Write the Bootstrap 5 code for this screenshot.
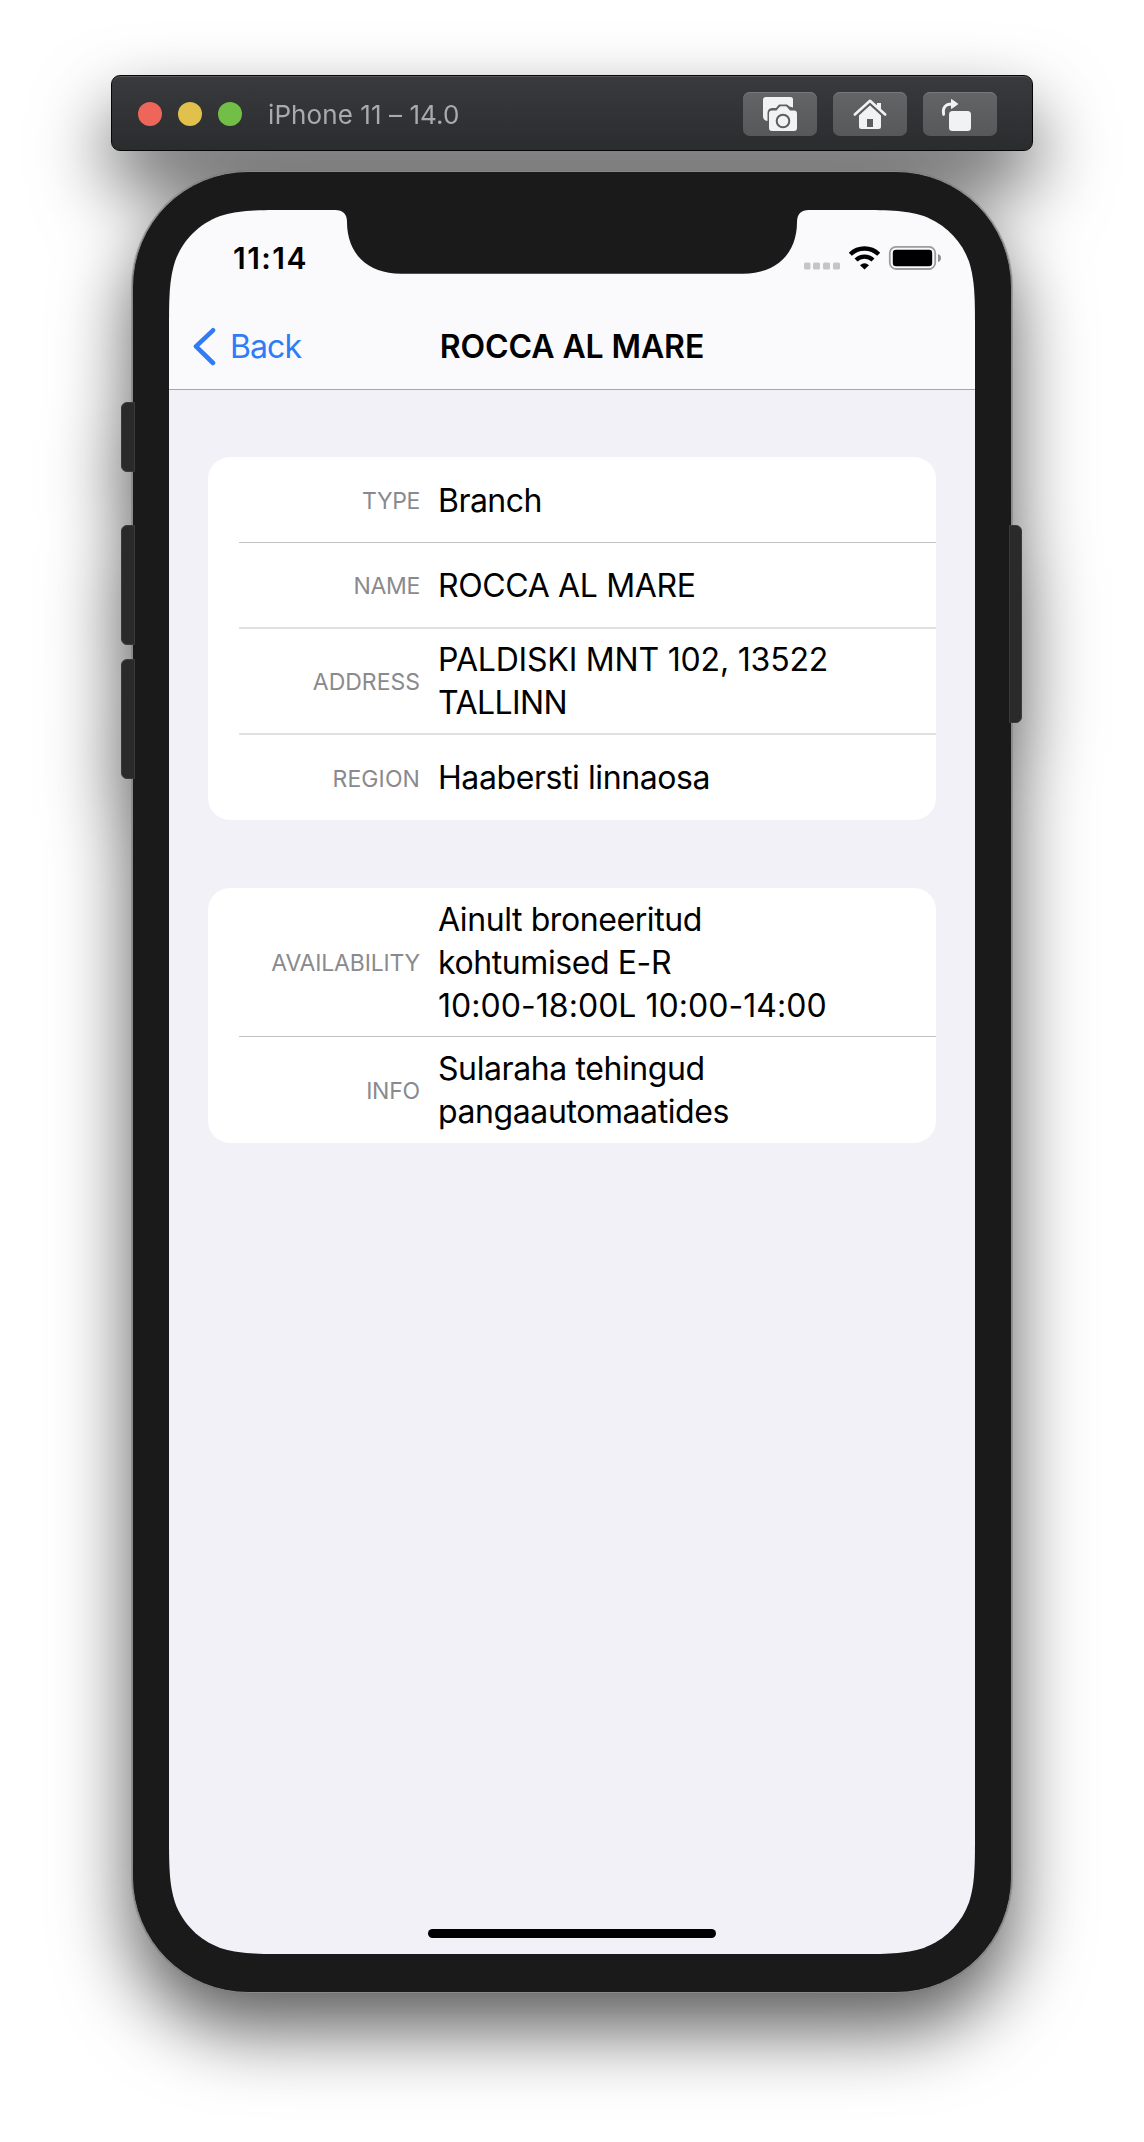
<!DOCTYPE html>
<html lang="en">
<head>
<meta charset="utf-8">
<meta name="viewport" content="width=device-width, initial-scale=1">
<title>iPhone 11 – 14.0</title>
<link href="https://cdn.jsdelivr.net/npm/bootstrap@5.3.0/dist/css/bootstrap.min.css" rel="stylesheet">
<style>
  body { background: #fff; font-family: Inter, "Liberation Sans", sans-serif; color: #000; }
  svg { display: block; flex: none; }
  .sim-stage { height: 2142px; padding-top: 75px; overflow: hidden; filter: drop-shadow(0 36px 37px rgba(0,0,0,.64)); }

  /* simulator title bar */
  .sim-bar { width: 922px; height: 76px; padding: 2px 35px 0 26px; border-radius: 9px; border: 1px solid #050606;
    background: linear-gradient(#393a3d, #2b2c2e); box-shadow: inset 0 1px 0 #58595b; }
  .sim-dot { width: 24px; height: 24px; border-radius: 50%; margin-right: 16px; }
  .sim-title { font-size: 26px; line-height: 32px; letter-spacing: .08px; color: #a9aaab; margin: 2px 0 0 10px; }
  .sim-tool { width: 74px; height: 44px; padding: 0; border: 0; border-radius: 7px;
    background: linear-gradient(#636466, #57585a); box-shadow: inset 0 1px 0 #77787a; }

  /* device body */
  .phone { width: 880px; height: 1822px; margin-top: 20px; padding: 38px 36px 0; border: 1px solid #8a8a8a; border-radius: 116px; background: #1a1a1a; box-shadow: 0 0 0 1px rgba(120,120,120,.5); }
  .side-key { width: 14px; border: 1px solid #3a3a3a; background: #2a2a2a; border-radius: 6px 0 0 6px; left: -12px; }
  .side-key.power { left: auto; right: -11px; width: 13px; border-radius: 0 6px 6px 0; top: 353px; height: 198px; }
  .key-mute { top: 230px; height: 70px; }
  .key-up { top: 353px; height: 120px; }
  .key-down { top: 487px; height: 120px; }

  .screen { width: 806px; height: 1744px; background: #f2f1f7;
    clip-path: path("M0 123.8C0 88.2 0 70.3 6.1 51.2C13.7 30.2 30.2 13.7 51.2 6.1C70.3 0 88.2 0 123.8 0H682.2C717.8 0 735.7 0 754.8 6.1C775.8 13.7 792.3 30.2 799.9 51.2C806 70.3 806 88.2 806 123.8V1620.2C806 1655.8 806 1673.7 799.9 1692.8C792.3 1713.8 775.8 1730.3 754.8 1737.9C735.7 1744 717.8 1744 682.2 1744H123.8C88.2 1744 70.3 1744 51.2 1737.9C30.2 1730.3 13.7 1713.8 6.1 1692.8C0 1673.7 0 1655.8 0 1620.2Z"); }
  .screen-head { height: 180px; background: #fafafd; border-bottom: 1px solid #a7a6ab; }
  .notch { left: 166px; top: 0; }
  .status-row { height: 93px; padding: 3px 34px 0 64px; }
  .clock { font-size: 30px; font-weight: 600; line-height: 36px; letter-spacing: 1.45px; }
  .nav-row { height: 86px; padding-top: 2px; }
  .back-link { color: #2f7cf6; font-size: 32px; line-height: 40px; letter-spacing: -.9px; padding-left: 23px; }
  .back-icon { margin-top: -2px; }
  .page-title { font-size: 32px; line-height: 40px; font-weight: 600; letter-spacing: -.1px; margin: 0; }

  /* grouped form sections */
  .groups { padding: 67px 39px 0; gap: 68px; }
  .group-box { background: #fff; border: 0; border-radius: 22px; padding-left: 31px; }
  .field { height: 86px; border-bottom: 1px solid #c3c3c6; gap: 18px; }
  .field.soft-line { border-bottom: 2px solid #e1e1e2; }
  .field.h-two { height: 106px; }
  .field.h-three { height: 149px; }
  .field:last-child { border-bottom: 0; }
  .field.h-end { height: 85px; }
  .field dt { width: 181px; padding-top: 2px; text-align: right; font-weight: 400; font-size: 23px; line-height: 28px; color: #8a8a8e; white-space: nowrap; }
  .field dd { margin: 0; font-size: 32px; line-height: 43px; white-space: nowrap; }
  .field dd.drop-1 { padding-top: 2px; }
  .ls-4 { letter-spacing: -.41px; }
  .ls-2 { letter-spacing: -.19px; }
  .ls-3 { letter-spacing: -.36px; }
  .ls-5 { letter-spacing: -.55px; }
  .home-bar { width: 288px; height: 9px; border-radius: 5px; background: #000; margin-bottom: 16px; }
</style>
<script src="https://cdn.jsdelivr.net/npm/bootstrap@5.3.0/dist/js/bootstrap.bundle.min.js"></script>
</head>
<body>
<div class="sim-stage d-flex flex-column align-items-center">
  <header class="sim-bar d-flex align-items-center flex-shrink-0">
    <span class="sim-dot" style="background:#ee6559"></span>
    <span class="sim-dot" style="background:#e1c04c"></span>
    <span class="sim-dot" style="background:#71bf47"></span>
    <div class="sim-title">iPhone 11 – 14.0</div>
    <div class="d-flex ms-auto" style="gap:16px">
      <button class="btn sim-tool" aria-label="Screenshot">
        <svg width="74" height="44" viewBox="0 0 74 44">
          <path fill="#f1f2f4" d="M23 5H47.500Q50 5 50 7.500V15.500L46.500 14.500L44 12.500H36L33 16H29Q24.500 16.500 24.500 21V29Q20 28.500 20 24V8Q20 5 23 5Z"/>
          <path fill="#f1f2f4" d="M29 18.500H33.500L36.500 15Q37 14.300 38 14.300H42.500Q43.500 14.300 44 15L47 18.500H51Q54 18.500 54 21.500V36Q54 39 51 39H29Q26 39 26 36V21.500Q26 18.500 29 18.500Z"/>
          <circle cx="40" cy="29" r="6.300" fill="none" stroke="#5c5d5f" stroke-width="2"/>
        </svg>
      </button>
      <button class="btn sim-tool" aria-label="Home">
        <svg width="74" height="44" viewBox="0 0 74 44">
          <path fill="#f1f2f4" d="M44 12V11H48V18L44 14.500Z"/>
          <path fill="#f1f2f4" d="M37 13L48 23V34.500Q48 37 45.500 37H28.500Q26 37 26 34.500V23Z"/>
          <path fill="none" stroke="#5c5d5f" stroke-width="1.500" d="M23.500 24.800L37 12.300L50.500 24.800"/>
          <path fill="none" stroke="#f1f2f4" stroke-width="2.600" stroke-linecap="round" stroke-linejoin="round" d="M21.800 22.500L37 8.800L52.200 22.500"/>
          <path fill="#5c5d5f" d="M34 27H40V35H34Z"/>
        </svg>
      </button>
      <button class="btn sim-tool" aria-label="Rotate">
        <svg width="74" height="44" viewBox="0 0 74 44">
          <path fill="none" stroke="#f1f2f4" stroke-width="2.800" stroke-linecap="round" d="M20.600 22.500C19.300 16 22 12 29 12"/>
          <path fill="#f1f2f4" stroke="#f1f2f4" stroke-linejoin="round" d="M28.500 7.500L34.800 12L28.500 16.500Z"/>
          <rect x="26" y="19" width="22" height="20" rx="3.500" fill="#f1f2f4"/>
        </svg>
      </button>
    </div>
  </header>

  <div class="phone position-relative flex-shrink-0">
    <span class="side-key key-mute position-absolute"></span>
    <span class="side-key key-up position-absolute"></span>
    <span class="side-key key-down position-absolute"></span>
    <span class="side-key power position-absolute"></span>

    <main class="screen position-relative d-flex flex-column">
      <svg class="notch position-absolute" width="474" height="64" viewBox="0 0 474 64"><path fill="#1a1a1a" d="M0 0C8 0 12 4 12 12C12 43 32 63.700 66 63.700H408C442 63.700 462 43 462 12C462 4 466 0 474 0Z"/></svg>
      <div class="screen-head">
        <div class="status-row d-flex align-items-center">
          <span class="clock">11:14</span>
          <svg class="ms-auto" width="138" height="26" viewBox="804 245 138 26">
            <g fill="#c5c5c7"><rect x="805" y="262.500" width="6.500" height="7" rx="1.500"/><rect x="814" y="262.500" width="7" height="7" rx="1.500"/><rect x="824" y="262.500" width="7" height="7" rx="1.500"/><rect x="834" y="262.500" width="7" height="7" rx="1.500"/></g>
            <g fill="none" stroke="#000" stroke-width="4.300"><path d="M851.300 254.200A20.500 20.500 0 0 1 879.700 254.200"/><path d="M857 260A12.300 12.300 0 0 1 874 260"/></g>
            <path d="M861 265.300Q865.500 261 870 265.300L865.500 269.500Z"/>
            <rect x="890.800" y="246.800" width="45.400" height="22.200" rx="6.200" fill="none" stroke="#9c9c9e" stroke-width="1.800"/>
            <rect x="893.800" y="249.800" width="39.400" height="16.400" rx="3.200"/>
            <path fill="#8f8f91" d="M939 254Q942 255 942 258Q942 261 939 262Z"/>
          </svg>
        </div>
        <div class="nav-row d-flex align-items-center justify-content-center position-relative">
          <a class="back-link text-decoration-none d-flex align-items-center position-absolute start-0" href="#">
            <svg class="back-icon" width="38" height="40" viewBox="0 0 38 40"><path fill="none" stroke="#2f7cf6" stroke-width="4.600" stroke-linecap="round" stroke-linejoin="round" d="M21 4.300L4 20.300L21 37"/></svg>Back</a>
          <h1 class="page-title">ROCCA AL MARE</h1>
        </div>
      </div>

      <div class="groups d-flex flex-column">
        <dl class="card group-box m-0">
          <div class="field d-flex align-items-center"><dt style="letter-spacing:-.35px">TYPE</dt><dd class="ls-5 drop-1">Branch</dd></div>
          <div class="field soft-line d-flex align-items-center"><dt style="letter-spacing:-.35px">NAME</dt><dd class="ls-3">ROCCA AL MARE</dd></div>
          <div class="field soft-line h-two d-flex align-items-center"><dt style="letter-spacing:0">ADDRESS</dt><dd><span class="d-block ls-2">PALDISKI MNT 102, 13522</span><span class="d-block ls-5">TALLINN</span></dd></div>
          <div class="field h-end d-flex align-items-center"><dt style="letter-spacing:.1px">REGION</dt><dd class="ls-4">Haabersti linnaosa</dd></div>
        </dl>
        <dl class="card group-box m-0">
          <div class="field h-three d-flex align-items-center"><dt style="letter-spacing:-.18px">AVAILABILITY</dt><dd><span class="d-block ls-4">Ainult broneeritud</span><span class="d-block ls-4">kohtumised E-R</span><span class="d-block" style="letter-spacing:.04px">10:00-18:00L 10:00-14:00</span></dd></div>
          <div class="field h-two d-flex align-items-center"><dt style="letter-spacing:-.2px">INFO</dt><dd class="ls-4"><span class="d-block">Sularaha tehingud</span><span class="d-block">pangaautomaatides</span></dd></div>
        </dl>
      </div>
      <div class="home-bar mt-auto mx-auto"></div>
    </main>
  </div>
</div>
</body>
</html>
